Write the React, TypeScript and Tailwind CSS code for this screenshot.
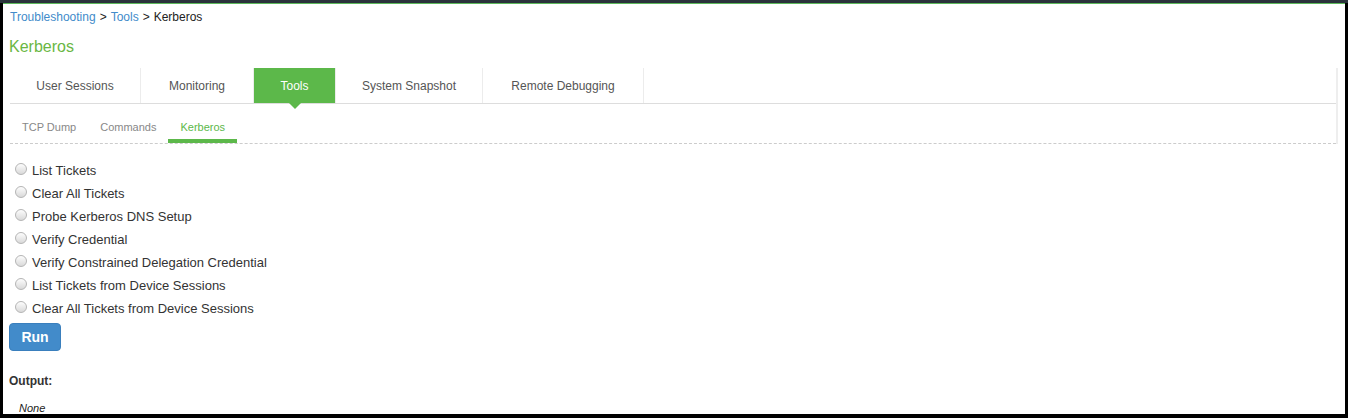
import React, { useState } from 'react';

const TABS = [
  { label: 'User Sessions', width: 'w-[130px]' },
  { label: 'Monitoring', width: 'w-[113px]' },
  { label: 'Tools', width: 'w-[82px]' },
  { label: 'System Snapshot', width: 'w-[147px]' },
  { label: 'Remote Debugging', width: 'w-[161px]' },
];

const SUB_TABS = ['TCP Dump', 'Commands', 'Kerberos'];

const OPTIONS = [
  'List Tickets',
  'Clear All Tickets',
  'Probe Kerberos DNS Setup',
  'Verify Credential',
  'Verify Constrained Delegation Credential',
  'List Tickets from Device Sessions',
  'Clear All Tickets from Device Sessions',
];

export default function App() {
  const [selected, setSelected] = useState<string | null>(null);
  const activeTab = 'Tools';
  const activeSub = 'Kerberos';

  return (
    <div className="h-[418px] w-[1348px] overflow-hidden bg-black font-['Liberation_Sans',Arial,sans-serif]">
      <div className="h-[3px] bg-[#2b333c]" />
      <div className="h-px bg-[#5cb85c] mx-[3px]" />
      <div className="mx-[3px] h-[410px] overflow-hidden bg-white pl-[6px] pr-[5px]">
        {/* breadcrumb */}
        <div className="h-[26px] flex items-center text-[12px] text-[#222] pl-px">
          <a className="text-[#428bca]">Troubleshooting</a>
          <span className="mx-[4px]">&gt;</span>
          <a className="text-[#428bca]">Tools</a>
          <span className="mx-[4px]">&gt;</span>
          <span>Kerberos</span>
        </div>

        <h1 className="h-[33px] flex items-center text-[16px] text-[#6ab744]">Kerberos</h1>

        {/* tabs + sub tabs panel */}
        <div className="mt-[5px] ml-px mr-[2px] border-r-2 border-[#eeeeee]">
          <div className="flex h-[35px] border-b border-[#dddddd] box-content">
            {TABS.map((t, i) => {
              const active = t.label === activeTab;
              return (
                <div
                  key={t.label}
                  className={`${t.width} relative flex items-center justify-center text-[12px] ${
                    i > 0 ? 'border-l border-[#ececec]' : ''
                  } ${active ? 'bg-[#5cb84a] text-white' : 'text-[#555]'}`}
                >
                  {t.label}
                  {active && (
                    <span className="absolute left-1/2 -translate-x-1/2 top-full w-0 h-0 border-l-[6px] border-r-[6px] border-t-[6px] border-l-transparent border-r-transparent border-t-[#5cb84a]" />
                  )}
                </div>
              );
            })}
            <div className="border-l border-[#ececec]" />
          </div>

          <div className="flex h-[40px] border-b border-dashed border-[#cccccc]">
            {SUB_TABS.map((s) => {
              const active = s === activeSub;
              return (
                <div
                  key={s}
                  className={`px-[12px] pt-[16px] text-[11px] leading-[14px] h-[39px] border-b-4 ${
                    active ? 'text-[#5cb84a] border-[#5cb84a]' : 'text-[#888] border-transparent'
                  }`}
                >
                  {s}
                </div>
              );
            })}
          </div>
        </div>

        {/* options */}
        <div className="mt-[15px] flex flex-col">
          {OPTIONS.map((o) => (
            <label
              key={o}
              className="h-[23px] flex items-center text-[13px] text-[#333] cursor-pointer"
              onClick={() => setSelected(o)}
            >
              <span className="ml-[6px] mr-[5px] -mt-[4px] w-[12px] h-[12px] rounded-full border border-[#b5b5b5] bg-gradient-to-b from-[#fdfdfd] to-[#d9d9d9] flex items-center justify-center">
                {selected === o && <span className="w-[6px] h-[6px] rounded-full bg-[#333]" />}
              </span>
              {o}
            </label>
          ))}
        </div>

        <div className="mt-[3px]">
          <button className="w-[52px] h-[28px] rounded-[4px] bg-[#428bca] border border-[#3a7fbd] text-white font-bold text-[14px]">
            Run
          </button>
        </div>

        <div className="mt-[21px] text-[12px] leading-[18px] font-bold text-[#333]">Output:</div>
        <div className="mt-[10px] ml-[10px] text-[11px] leading-[16px] italic text-[#222]">None</div>
      </div>
    </div>
  );
}
